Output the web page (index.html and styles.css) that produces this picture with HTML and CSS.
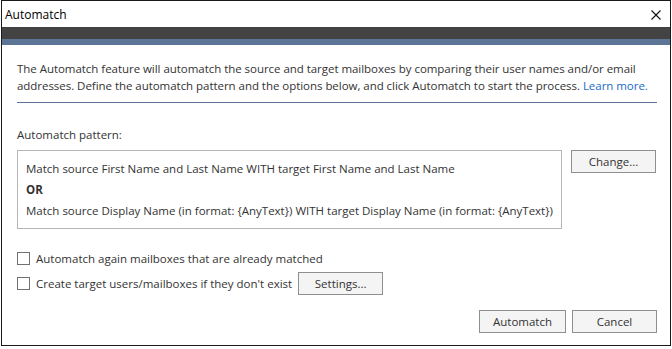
FILE: index.html
```html
<!DOCTYPE html>
<html lang="en">
<head>
    <meta charset="UTF-8">
    <title>Automatch</title>
    <link rel="stylesheet" href="styles.css">
</head>
<body>
<div class="window">
    <div class="titlebar">
        <span class="title">Automatch</span>
        <svg class="close" width="10" height="10" viewBox="0 0 10 10">
            <path d="M0.5 0.5 L9.5 9.5 M9.5 0.5 L0.5 9.5" stroke="#111" stroke-width="1.1" fill="none"/>
        </svg>
    </div>
    <div class="band-dark"></div>
    <div class="band-blue"></div>

    <div class="content">
        <p class="intro">The Automatch feature will automatch the source and target mailboxes by comparing their user names and/or email addresses. Define the automatch pattern and the options below, and click Automatch to start the process. <a href="#" class="link">Learn more.</a></p>

        <div class="label">Automatch pattern:</div>
        <div class="pattern-row">
            <div class="pattern-box">
                <div>Match source First Name and Last Name WITH target First Name and Last Name</div>
                <div class="bold">OR</div>
                <div>Match source Display Name (in format: {AnyText}) WITH target Display Name (in format: {AnyText})</div>
            </div>
            <button class="btn">Change...</button>
        </div>

        <div class="options">
            <label class="option">
                <input type="checkbox">
                <span>Automatch again mailboxes that are already matched</span>
            </label>
            <div class="option">
                <label class="option">
                    <input type="checkbox">
                    <span>Create target users/mailboxes if they don't exist</span>
                </label>
                <button class="btn">Settings...</button>
            </div>
        </div>

        <div class="footer">
            <button class="btn btn-wide">Automatch</button>
            <button class="btn">Cancel</button>
        </div>
    </div>
</div>
</body>
</html>
```

FILE: styles.css
```css
body, html {
    margin: 0;
    padding: 0;
    background: #fff;
    font-family: "Open Sans", sans-serif;
    font-size: 11.5px;
    color: #333;
}

.window {
    margin-left: 1px;
    width: 668px;
    height: 344px;
    border: 1px solid #1a1a1a;
    background: #fff;
    display: flex;
    flex-direction: column;
}

.titlebar {
    height: 26px;
    display: flex;
    align-items: center;
    justify-content: space-between;
    padding: 0 9px 0 3px;
}

.title {
    font-size: 12px;
    color: #000;
}

.close {
    margin-top: 2px;
}

.band-dark {
    height: 12px;
    background: #434343;
}

.band-blue {
    height: 6px;
    background: #5c7597;
}

.content {
    padding: 0 13px 0 15px;
    flex: 1;
    display: flex;
    flex-direction: column;
}

.intro {
    margin: 15px 0 0;
    line-height: 17px;
    padding-bottom: 8px;
    border-bottom: 1px solid #5c7597;
    letter-spacing: -0.04px;
}

.link {
    color: #1a6bc4;
    text-decoration: none;
}

.label {
    margin-top: 23px;
    line-height: 17px;
}

.pattern-row {
    margin-top: 7px;
    display: flex;
    align-items: flex-start;
    gap: 9px;
}

.pattern-box {
    width: 527px;
    border: 1px solid #b5b5b5;
    padding: 7px 8px 7px 8px;
    line-height: 21px;
}

.bold {
    font-weight: bold;
}

.btn {
    font-family: inherit;
    font-size: 11.5px;
    color: #333;
    background: #f4f4f4;
    border: 1px solid #8f8f8f;
    border-radius: 0;
    width: 85px;
    height: 23px;
    padding: 0;
}

.btn-wide {
    width: 87px;
}

.options {
    margin-top: 18px;
    display: flex;
    flex-direction: column;
    gap: 2px;
}

.option {
    display: flex;
    align-items: center;
    gap: 6px;
    min-height: 23px;
}

.option input {
    appearance: none;
    margin: 0;
    width: 13px;
    height: 13px;
    border: 1px solid #707070;
    background: #fff;
}

.footer {
    margin-top: 15px;
    display: flex;
    justify-content: flex-end;
    gap: 6px;
}
```
